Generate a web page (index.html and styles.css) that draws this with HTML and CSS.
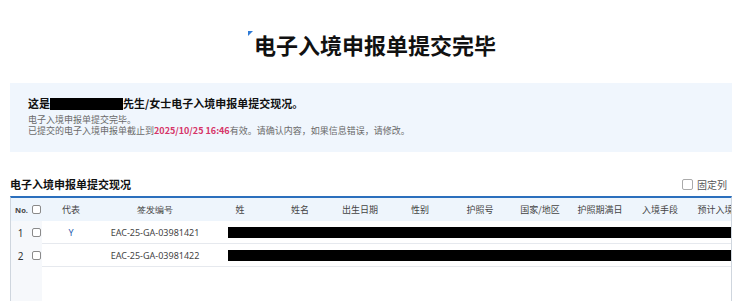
FILE: index.html
```html
<!DOCTYPE html>
<html lang="zh">
<head>
<meta charset="utf-8">
<title>电子入境申报单提交完毕</title>
<link rel="stylesheet" href="styles.css">
</head>
<body>
<div class="page">
  <h1 class="title"><svg class="mark" width="5" height="5" viewBox="0 0 5 5"><polygon points="0,0 5,0 0,5" fill="#2f7bd6"/></svg>电子入境申报单提交完毕</h1>

  <div class="notice">
    <p class="notice-head">这是<span class="redact"></span>先生/女士电子入境申报单提交现况。</p>
    <p class="notice-text">电子入境申报单提交完毕。</p>
    <p class="notice-text">已提交的电子入境申报单截止到<span class="date">2025/10/25 16:46</span>有效。请确认内容，如果信息错误，请修改。</p>
  </div>

  <div class="section-head">
    <h2 class="section-title">电子入境申报单提交现况</h2>
    <label class="fix-col"><span class="box big"></span>固定列</label>
  </div>

  <div class="grid">
    <div class="fixed">
      <div class="row head"><span class="c-no no-label">No.</span><span class="c-chk"><span class="box"></span></span></div>
      <div class="row"><span class="c-no">1</span><span class="c-chk"><span class="box"></span></span></div>
      <div class="row"><span class="c-no">2</span><span class="c-chk"><span class="box"></span></span></div>
    </div>
    <div class="scroll">
      <div class="row head">
        <span class="c c-rep">代表</span>
        <span class="c c-id">签发编号</span>
        <span class="c">姓</span>
        <span class="c">姓名</span>
        <span class="c">出生日期</span>
        <span class="c">性别</span>
        <span class="c">护照号</span>
        <span class="c">国家/地区</span>
        <span class="c">护照期满日</span>
        <span class="c">入境手段</span>
        <span class="c">预计入境日</span>
      </div>
      <div class="row body">
        <span class="c c-rep rep-y">Y</span>
        <span class="c c-id">EAC-25-GA-03981421</span>
        <span class="c c-rest"><span class="bar"></span></span>
      </div>
      <div class="row body">
        <span class="c c-rep"></span>
        <span class="c c-id">EAC-25-GA-03981422</span>
        <span class="c c-rest"><span class="bar"></span></span>
      </div>
    </div>
  </div>
</div>
</body>
</html>
```

FILE: styles.css
```css
* { box-sizing: border-box; }
html, body { margin: 0; padding: 0; height: 100%; }
body {
  background: #fff;
  color: #222;
  font-family: "Noto Sans", "Noto Sans CJK SC", sans-serif;
  overflow: hidden;
}
.page {
  padding: 28px 8px 0 10px;
  display: flex;
  flex-direction: column;
  height: 100%;
}
p, h1, h2 { margin: 0; }

.title {
  font-family: "Noto Sans CJK SC", sans-serif;
  font-size: 22px;
  line-height: 32px;
  font-weight: 700;
  color: #111;
  text-align: center;
  padding-left: 2px;
}
.mark { vertical-align: top; margin-top: 3px; margin-right: 1px; }

.notice {
  margin-top: 23px;
  background: #f0f6fd;
  padding: 13px 18px 15px;
  height: 69px;
}
.notice-head {
  font-family: "Noto Sans CJK SC", sans-serif;
  font-size: 11px;
  line-height: 14px;
  font-weight: 700;
  color: #111;
  margin-bottom: 4px;
}
.redact {
  display: inline-block;
  width: 73px;
  height: 12px;
  background: #000;
  vertical-align: -2px;
}
.notice-text {
  font-family: "Noto Sans CJK SC", sans-serif;
  font-size: 9px;
  line-height: 11px;
  color: #6a6a6a;
}
.date { color: #d63468; font-weight: 700; }

.section-head {
  margin-top: 24px;
  height: 16px;
  margin-bottom: 4px;
  display: flex;
  align-items: center;
  justify-content: space-between;
}
.section-title {
  font-family: "Noto Sans CJK SC", sans-serif;
  font-size: 11px;
  line-height: 16px;
  font-weight: 700;
  color: #111;
}
.fix-col {
  display: flex;
  align-items: center;
  gap: 4px;
  font-family: "Noto Sans CJK SC", sans-serif;
  font-size: 10px;
  color: #555;
  padding-right: 5px;
}

.box {
  display: inline-block;
  width: 9px;
  height: 9px;
  border: 1px solid #8a8a8a;
  border-radius: 2px;
  background: #fff;
}
.box.big { width: 11px; height: 11px; border-color: #aaa; }

.grid {
  flex: 1;
  display: flex;
  border-top: 2px solid #2b6fbd;
  border-left: 1px solid #cfd6de;
  border-right: 1px solid #cfd6de;
  overflow: hidden;
}
.fixed {
  width: 31px;
  flex: none;
  background: #f6f8fb;
}
.scroll {
  flex: 1;
  overflow: hidden;
  min-width: 0;
}
.row {
  display: flex;
  align-items: center;
  height: 23px;
  white-space: nowrap;
  font-size: 9px;
  color: #333;
}
.row.head { background: #eef5fc; }
.row.body { border-bottom: 1px solid #e6e9ee; }
.c-no {
  width: 19px;
  text-align: center;
  font-size: 10px;
  color: #333;
}
.no-label { font-size: 7.5px; font-weight: 700; color: #444; padding-left: 2px; }
.c-chk { width: 12px; display: flex; justify-content: center; }

.c {
  flex: none;
  width: 60px;
  text-align: center;
  font-family: "Noto Sans CJK SC", sans-serif;
  color: #444;
}
.c-rep { width: 58px; }
.c-id { width: 110px; font-family: "Noto Sans", sans-serif; color: #444; }
.rep-y { color: #2a5db0; font-family: "Noto Sans", sans-serif; }
.c-rest { width: 560px; text-align: left; padding-left: 18px; }
.bar {
  display: block;
  height: 11px;
  width: 540px;
  background: #000;
}
```
